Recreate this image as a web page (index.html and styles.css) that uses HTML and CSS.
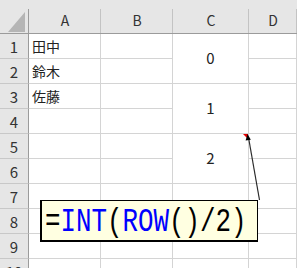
FILE: index.html
```html
<!DOCTYPE html>
<html lang="ja">
<head>
  <meta charset="UTF-8" />
  <title>INT(ROW()/2)</title>
  <link rel="stylesheet" href="styles.css">
</head>
<body>
  <div class="sheet">
    <!-- column headers -->
    <div class="hd corner">
      <svg width="18" height="20" viewBox="0 0 18 20"><polygon points="17,0 17,20 0,20" fill="#b5b5b5"/></svg>
    </div>
    <div class="hd col">A</div>
    <div class="hd col">B</div>
    <div class="hd col">C</div>
    <div class="hd col">D</div>

    <div class="rh">1</div><div class="cell name">田中</div><div class="cell"></div><div class="cell num pair">0</div><div class="cell"></div>
    <div class="rh">2</div><div class="cell name">鈴木</div><div class="cell"></div><div class="cell"></div>
    <div class="rh">3</div><div class="cell name">佐藤</div><div class="cell"></div><div class="cell num pair">1</div><div class="cell"></div>
    <div class="rh">4</div><div class="cell"></div><div class="cell"></div><div class="cell"></div>
    <div class="rh">5</div><div class="cell"></div><div class="cell"></div><div class="cell num pair">2</div><div class="cell"></div>
    <div class="rh">6</div><div class="cell"></div><div class="cell"></div><div class="cell"></div>
    <div class="rh">7</div><div class="cell"></div><div class="cell"></div><div class="cell"></div><div class="cell"></div>
    <div class="rh">8</div><div class="cell"></div><div class="cell"></div><div class="cell"></div><div class="cell"></div>
    <div class="rh">9</div><div class="cell"></div><div class="cell"></div><div class="cell"></div><div class="cell"></div>
    <div class="rh">10</div><div class="cell"></div><div class="cell"></div><div class="cell"></div><div class="cell"></div>
  </div>

  <!-- comment marker + leader line -->
  <svg class="leader" width="297" height="268" viewBox="0 0 297 268">
    <polygon points="243,134 248,134 248,139" fill="#e00000"/>
    <line x1="259.5" y1="200" x2="248.6" y2="138" stroke="#2b2b2b" stroke-width="1.2"/>
    <polygon points="247.6,134 245.6,140.6 250.8,139.8" fill="#000"/>
  </svg>

  <div class="note">
    <span class="formula"><span class="op">=</span><span class="fn">INT</span>(<span class="fn">ROW</span>()/2)</span>
  </div>
</body>
</html>
```

FILE: styles.css
```css
html, body {
  margin: 0;
  padding: 0;
  background: #fff;
  overflow: hidden;
}

body {
  position: relative;
  width: 297px;
  height: 268px;
  font-family: "Noto Sans CJK JP", "Noto Sans", sans-serif;
  color: #222;
}

.sheet {
  display: grid;
  grid-template-columns: 29px 72px 72px 76px 48px;
  grid-template-rows: 34px repeat(10, 25px);
}

.hd {
  position: relative;
  background: #e6e6e6;
  border-bottom: 1px solid #9b9b9b;
  box-sizing: border-box;
}

.hd::after {
  content: "";
  position: absolute;
  right: 0;
  top: 9px;
  bottom: 0;
  width: 1px;
  background: #c3c3c3;
}

.corner::after {
  background: #9b9b9b;
}

.corner svg {
  position: absolute;
  left: 8px;
  top: 12px;
}

.col {
  display: flex;
  align-items: center;
  justify-content: center;
  padding-top: 7px;
  font-size: 14px;
  color: #333;
}

.rh {
  background: #e6e6e6;
  border-right: 1px solid #9b9b9b;
  border-bottom: 1px solid #c8c8c8;
  box-sizing: border-box;
  display: flex;
  align-items: center;
  justify-content: center;
  font-size: 15px;
  color: #333;
}

.cell {
  border-right: 1px solid #d4d4d4;
  border-bottom: 1px solid #d4d4d4;
  box-sizing: border-box;
  display: flex;
  align-items: center;
  font-size: 14px;
}

.name {
  padding-left: 3px;
}

.num {
  justify-content: center;
  font-size: 15px;
  padding-bottom: 2px;
}

.pair {
  grid-row: span 2;
}

.leader {
  position: absolute;
  left: 0;
  top: 0;
  pointer-events: none;
}

.note {
  position: absolute;
  left: 40px;
  top: 200px;
  width: 218px;
  height: 42px;
  box-sizing: border-box;
  background: #ffffe1;
  border: 1px solid #000;
  border-left-width: 2px;
  border-bottom-width: 2px;
  padding: 3px 0 0 3px;
  white-space: nowrap;
  overflow: hidden;
}

.formula {
  display: inline-block;
  font-family: "Liberation Mono", "DejaVu Sans Mono", monospace;
  font-size: 34px;
  line-height: 36px;
  color: #000;
  transform: scaleX(0.76);
  transform-origin: left center;
}

.fn {
  color: #0000ff;
}
```
